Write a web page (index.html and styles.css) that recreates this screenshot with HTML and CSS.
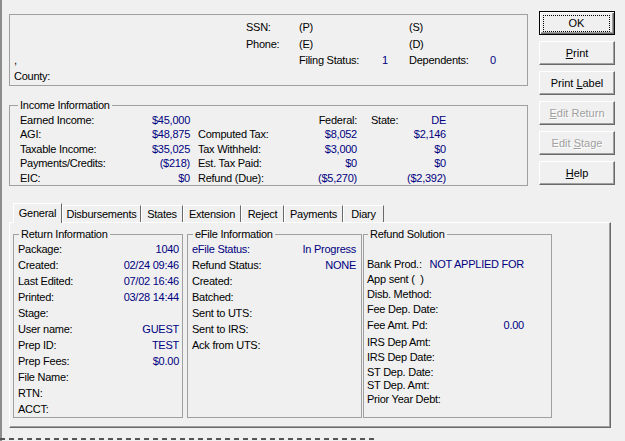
FILE: index.html
```html
<!DOCTYPE html>
<html lang="en">
<head>
  <meta charset="UTF-8" />
  <title>Return Summary</title>
  <link rel="stylesheet" href="styles.css">
</head>
<body>
  <div class="window">
    <div class="top">
      <div class="left-col">
        <div class="header-box">
          <span></span><span>SSN:</span><span>(P)</span><span></span><span>(S)</span><span></span>
          <span></span><span>Phone:</span><span>(E)</span><span></span><span>(D)</span><span></span>
          <span>,</span><span></span><span>Filing Status:</span><span class="v">1</span><span>Dependents:</span><span class="v">0</span>
          <span>County:</span>
        </div>

        <fieldset class="groupbox income">
          <legend>Income Information</legend>
          <div class="income-grid">
            <span>Earned Income:</span><span class="v r">$45,000</span><span></span><span></span><span class="r">Federal:</span><span></span><span>State:</span><span class="v r">DE</span>
            <span>AGI:</span><span class="v r">$48,875</span><span></span><span>Computed Tax:</span><span class="v r">$8,052</span><span></span><span></span><span class="v r">$2,146</span>
            <span>Taxable Income:</span><span class="v r">$35,025</span><span></span><span>Tax Withheld:</span><span class="v r">$3,000</span><span></span><span></span><span class="v r">$0</span>
            <span>Payments/Credits:</span><span class="v r">($218)</span><span></span><span>Est. Tax Paid:</span><span class="v r">$0</span><span></span><span></span><span class="v r">$0</span>
            <span>EIC:</span><span class="v r">$0</span><span></span><span>Refund (Due):</span><span class="v r">($5,270)</span><span></span><span></span><span class="v r">($2,392)</span>
          </div>
        </fieldset>
      </div>

      <div class="buttons">
        <button class="btn default"><span>OK</span></button>
        <button class="btn"><u>P</u>rint</button>
        <button class="btn">Print <u>L</u>abel</button>
        <button class="btn" disabled><u>E</u>dit Return</button>
        <button class="btn" disabled>Edit <u>S</u>tage</button>
        <button class="btn"><u>H</u>elp</button>
      </div>
    </div>

    <div class="tabbar">
      <div class="tab active">General</div>
      <div class="tab">Disbursements</div>
      <div class="tab">States</div>
      <div class="tab">Extension</div>
      <div class="tab">Reject</div>
      <div class="tab">Payments</div>
      <div class="tab">Diary</div>
    </div>

    <div class="panel">
      <fieldset class="groupbox ret">
        <legend>Return Information</legend>
        <div class="row"><span>Package:</span><span class="v">1040</span></div>
        <div class="row"><span>Created:</span><span class="v">02/24 09:46</span></div>
        <div class="row"><span>Last Edited:</span><span class="v">07/02 16:46</span></div>
        <div class="row"><span>Printed:</span><span class="v">03/28 14:44</span></div>
        <div class="row"><span>Stage:</span></div>
        <div class="row"><span>User name:</span><span class="v">GUEST</span></div>
        <div class="row"><span>Prep ID:</span><span class="v">TEST</span></div>
        <div class="row"><span>Prep Fees:</span><span class="v">$0.00</span></div>
        <div class="row"><span>File Name:</span></div>
        <div class="row"><span>RTN:</span></div>
        <div class="row"><span>ACCT:</span></div>
      </fieldset>

      <fieldset class="groupbox efile">
        <legend>eFile Information</legend>
        <div class="row"><span class="v">eFile Status:</span><span class="v">In Progress</span></div>
        <div class="row"><span>Refund Status:</span><span class="v">NONE</span></div>
        <div class="row"><span>Created:</span></div>
        <div class="row"><span>Batched:</span></div>
        <div class="row"><span>Sent to UTS:</span></div>
        <div class="row"><span>Sent to IRS:</span></div>
        <div class="row"><span>Ack from UTS:</span></div>
      </fieldset>

      <fieldset class="groupbox refund">
        <legend>Refund Solution</legend>
        <div class="row"><span>Bank Prod.:</span><span class="v">NOT APPLIED FOR</span></div>
        <div class="row"><span>App sent (&nbsp;&nbsp;)</span></div>
        <div class="row"><span>Disb. Method:</span></div>
        <div class="row"><span>Fee Dep. Date:</span></div>
        <div class="row down1"><span>Fee Amt. Pd:</span><span class="v">0.00</span></div>
        <div class="row down2"><span>IRS Dep Amt:</span></div>
        <div class="row"><span>IRS Dep Date:</span></div>
        <div class="row"><span>ST Dep. Date:</span></div>
        <div class="row up2"><span>ST Dep. Amt:</span></div>
        <div class="row up1"><span>Prior Year Debt:</span></div>
      </fieldset>
    </div>

    <div class="dashes"></div>
  </div>
</body>
</html>
```

FILE: styles.css
```css
body {
  margin: 0;
  width: 625px;
  height: 441px;
  background: #f0f0f0;
  color: #000;
  font-family: "Liberation Sans", Arial, sans-serif;
  font-size: 11px;
  letter-spacing: -0.25px;
  overflow: hidden;
}
.window {
  box-sizing: border-box;
  height: 441px;
  border-left: 2px solid #8c8c8c;
  padding: 11px 0 0 7px;
}
.top {
  display: flex;
  gap: 11px;
}
.left-col {
  width: 519px;
  padding-top: 3px;
}
.header-box {
  box-sizing: border-box;
  height: 72px;
  border: 1px solid #a0a0a0;
  padding: 3px 0 0 4px;
  display: grid;
  grid-template-columns: 232px 53px 83px 27px 81px 20px;
  grid-template-rows: 17px 17px 16px 15px;
  align-items: center;
}
.v {
  color: #000080;
}
.r {
  text-align: right;
}
.groupbox {
  box-sizing: border-box;
  margin: 0;
  padding: 0;
  border: 1px solid #a0a0a0;
  min-width: 0;
}
.groupbox legend {
  padding: 0 2px;
  margin-left: 1px;
  line-height: 14px;
}
.income {
  margin-top: 12px;
  padding-left: 10px;
}
.income legend {
  margin-left: -2px;
}
.income-grid {
  display: grid;
  grid-template-columns: 110px 60px 8px 102px 57px 14px 29px 46px;
  grid-template-rows: 15px 14px 15px 14px 15px;
  align-items: center;
}
.buttons {
  display: flex;
  flex-direction: column;
  gap: 6px;
  width: 76px;
}
.btn {
  display: block;
  box-sizing: border-box;
  height: 24px;
  padding: 0;
  margin: 0;
  font: inherit;
  line-height: 21px;
  text-align: center;
  white-space: nowrap;
  color: #000;
  background: #f0f0f0;
  border: 1px solid;
  border-color: #fff #696969 #696969 #fff;
  box-shadow: inset -1px -1px #a0a0a0;
}
.btn.default {
  border-color: #000;
  box-shadow: inset 1px 1px #fff, inset -1px -1px #696969, inset -2px -2px #a0a0a0;
  padding: 3px 4px 4px 3px;
}
.btn.default span {
  display: block;
  height: 15px;
  line-height: 14px;
  border: 1px dotted #000;
}
.btn:disabled {
  color: #a0a0a0;
  text-shadow: 1px 1px #fff;
}
.tabbar {
  display: flex;
  align-items: flex-end;
  height: 19px;
  margin-top: 17px;
  padding-left: 4px;
}
.tab {
  box-sizing: border-box;
  height: 17px;
  line-height: 16px;
  text-align: center;
  border-left: 1px solid #fff;
  border-top: 1px solid #fff;
  border-right: 1px solid #696969;
  white-space: nowrap;
}
.tab:nth-child(1) { width: 49px; }
.tab:nth-child(2) { width: 79px; }
.tab:nth-child(3) { width: 42px; }
.tab:nth-child(4) { width: 58px; }
.tab:nth-child(5) { width: 43px; }
.tab:nth-child(6) { width: 59px; }
.tab:nth-child(7) { width: 41px; }
.tab.active {
  height: 20px;
  line-height: 18px;
  margin-bottom: -1px;
  position: relative;
  z-index: 1;
  background: #f0f0f0;
}
.panel {
  box-sizing: border-box;
  width: 602px;
  height: 206px;
  border: 1px solid;
  border-color: #fff #696969 #696969 #fff;
  box-shadow: inset -1px -1px #a0a0a0;
  padding: 4px 0 0 3px;
  display: flex;
}
.panel .groupbox {
  height: 191px;
}
.row {
  display: flex;
  justify-content: space-between;
  white-space: nowrap;
}
.ret {
  width: 170px;
  margin-right: 4px;
  padding: 0 3px 0 4px;
}
.ret .row,
.efile .row {
  line-height: 16px;
}
.efile {
  width: 175px;
  margin-right: 1px;
  padding: 0 5px 0 4px;
}
.refund {
  width: 189px;
  padding: 16px 27px 0 3px;
}
.refund .row {
  line-height: 15px;
}
.refund .down1 {
  margin-top: 1px;
}
.refund .down2 {
  margin-top: 2px;
}
.refund .up2 {
  margin-top: -2px;
}
.refund .up1 {
  margin-top: -1px;
}
.dashes {
  width: 378px;
  height: 2px;
  margin: 10px 0 0 -9px;
  background: repeating-linear-gradient(90deg, #555 0 5px, transparent 5px 9px);
}
```
